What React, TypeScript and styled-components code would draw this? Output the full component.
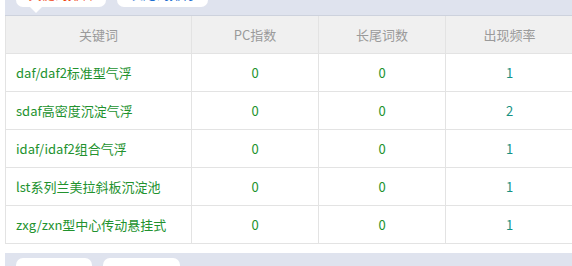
import React from "react";
import styled, { createGlobalStyle } from "styled-components";

const GlobalStyle = createGlobalStyle`
    html, body {
        margin: 0;
        padding: 0;
        background: #ffffff;
        overflow: hidden;
        font-family: "Noto Sans CJK SC", "Noto Sans", sans-serif;
    }
`;

const Page = styled.div`
    width: 568px;
    margin-left: 5px;
`;

const TabBand = styled.div<{ $bottom?: boolean }>`
    height: ${(p) => (p.$bottom ? "13px" : "15px")};
    background: #dfe3ee;
    border-bottom: ${(p) => (p.$bottom ? "none" : "1px solid #cdd2dd")};
    margin-top: ${(p) => (p.$bottom ? "9px" : "0")};
    display: flex;
    gap: 11px;
    padding-left: 11px;
    align-items: flex-start;
    overflow: ${(p) => (p.$bottom ? "hidden" : "visible")};
`;

const Tab = styled.div<{ $width: number; $color: string; $top?: boolean; $active?: boolean }>`
    position: relative;
    box-sizing: border-box;
    width: ${(p) => p.$width}px;
    height: 26px;
    margin-top: ${(p) => (p.$top ? "-19px" : "5px")};
    background: #ffffff;
    border-radius: 7px;
    color: ${(p) => p.$color};
    font-size: 13px;
    line-height: 26px;
    text-align: center;
    &::after {
        content: "";
        display: ${(p) => (p.$active ? "block" : "none")};
        position: absolute;
        left: 14px;
        bottom: -6px;
        border-left: 6px solid transparent;
        border-right: 6px solid transparent;
        border-top: 6px solid #ffffff;
    }
`;

const Grid = styled.div`
    display: grid;
    grid-template-columns: 186px 127px 127px 128px;
    border-left: 1px solid #e3e3e3;
`;

const Cell = styled.div<{ $head?: boolean; $left?: boolean; $color?: string }>`
    box-sizing: border-box;
    height: 38px;
    display: flex;
    align-items: center;
    justify-content: ${(p) => (p.$left ? "flex-start" : "center")};
    padding-left: ${(p) => (p.$left ? "10px" : "0")};
    border-right: 1px solid #e3e3e3;
    border-bottom: 1px solid #e3e3e3;
    background: ${(p) => (p.$head ? "#f0f0f0" : "#ffffff")};
    color: ${(p) => (p.$head ? "#9a9a9a" : p.$color || "#22922e")};
    font-size: 13px;
    white-space: nowrap;
`;

const headers = ["关键词", "PC指数", "长尾词数", "出现频率"];

const rows = [
    { keyword: "daf/daf2标准型气浮", pc: 0, tail: 0, freq: 1 },
    { keyword: "sdaf高密度沉淀气浮", pc: 0, tail: 0, freq: 2 },
    { keyword: "idaf/idaf2组合气浮", pc: 0, tail: 0, freq: 1 },
    { keyword: "lst系列兰美拉斜板沉淀池", pc: 0, tail: 0, freq: 1 },
    { keyword: "zxg/zxn型中心传动悬挂式", pc: 0, tail: 0, freq: 1 },
];

const App: React.FC = () => {
    return (
        <>
            <GlobalStyle />
            <Page>
                <TabBand>
                    <Tab $top $active $width={90} $color="#f0420f">
                        关键词排名
                    </Tab>
                    <Tab $top $width={91} $color="#1f6fd1">
                        长尾词排行
                    </Tab>
                </TabBand>
                <Grid>
                    {headers.map((h) => (
                        <Cell key={h} $head>
                            {h}
                        </Cell>
                    ))}
                    {rows.map((r) => (
                        <React.Fragment key={r.keyword}>
                            <Cell $left>{r.keyword}</Cell>
                            <Cell>{r.pc}</Cell>
                            <Cell>{r.tail}</Cell>
                            <Cell $color="#179283">{r.freq}</Cell>
                        </React.Fragment>
                    ))}
                </Grid>
                <TabBand $bottom>
                    <Tab $width={76} $color="#333333" />
                    <Tab $width={77} $color="#333333" />
                </TabBand>
            </Page>
        </>
    );
};

export default App;
